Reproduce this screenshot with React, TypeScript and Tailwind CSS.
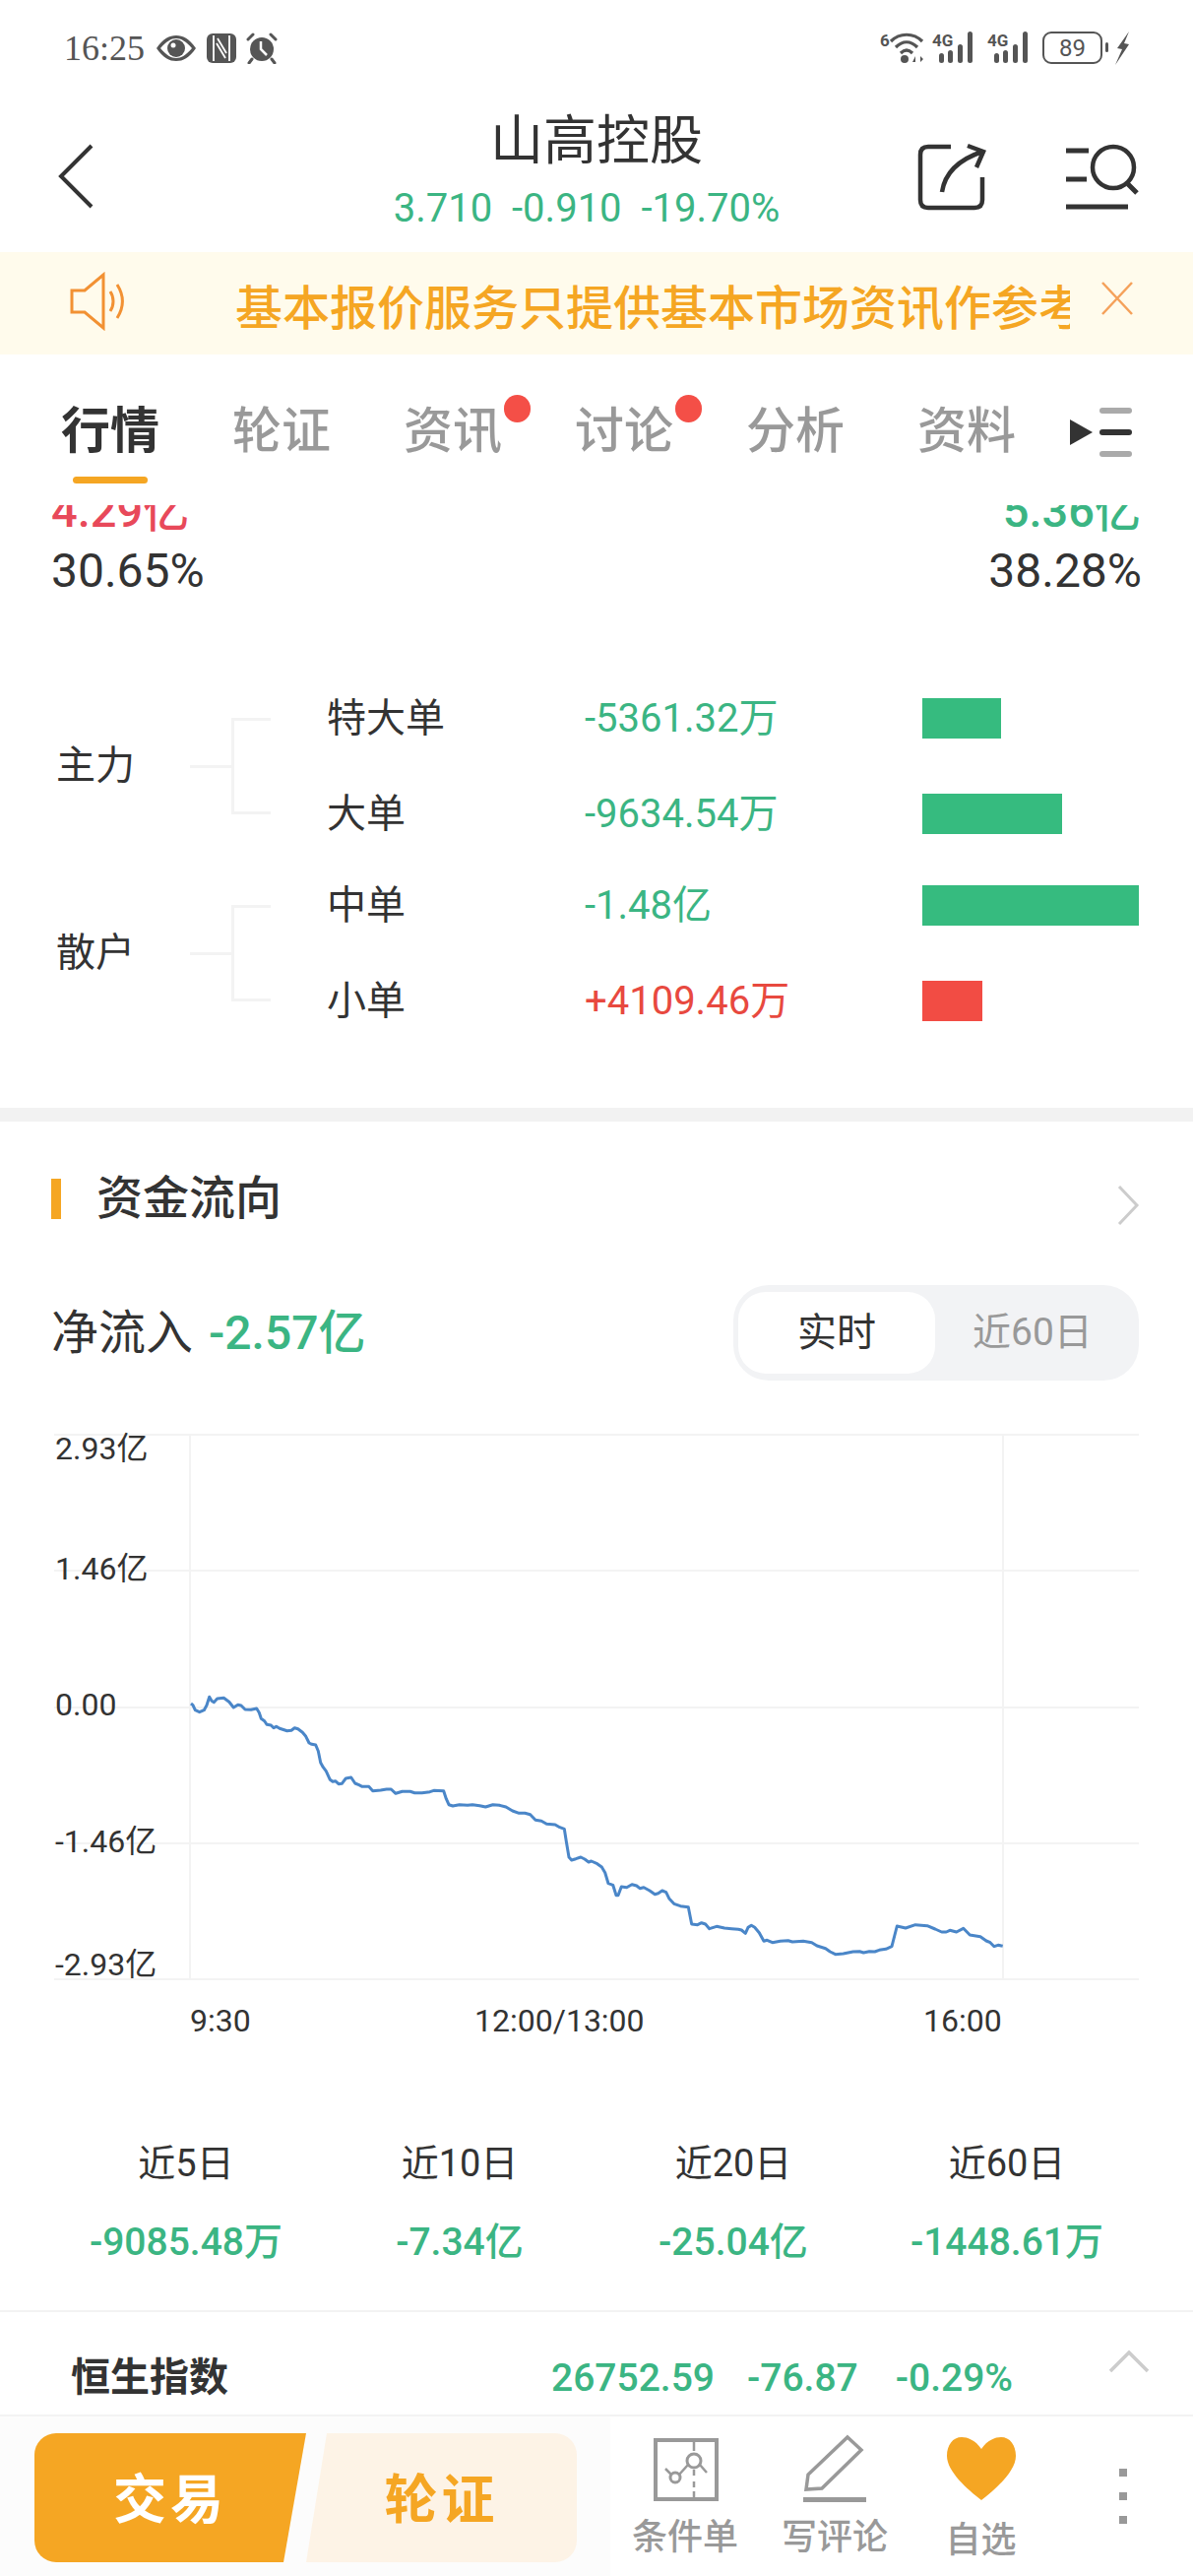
import React from 'react';

const GREEN = 'text-[#3bb583]';

// traced from the reference, in 3x crop coordinates
const seg1 = [12,90,18,95,25,110,38,116,52,110,60,95,68,70,75,82,82,86,92,75,112,73,128,85,142,102,155,94,165,96,177,108,195,109,212,105,220,118,226,136,236,143,243,154,256,156,264,164,272,160,282,166,305,173,318,172,328,164,338,167,352,178,362,190,372,210,380,214,392,216,400,235,407,270,415,284,424,296,436,322,444,328,452,326,462,335,472,334,484,318,500,315,512,333,524,338,534,343,554,343,566,356,590,354,608,351,622,351,636,364,656,358,680,358,694,362,716,362,740,359,752,355,782,356,790,380,798,398,810,402,830,398,855,400,870,398];
const seg2 = [30,158,52,161,70,165,92,158,112,160,132,165,152,177,172,184,190,184,206,188,222,205,240,208,256,217,282,219,296,227,310,232,316,270,324,318,332,327,345,323,360,318,372,324,384,333,392,330,410,338,424,348,434,365,444,398,458,403,468,434,474,434,484,408,500,410,516,401,530,405,540,413,552,410,570,420,586,431,596,428,608,420,620,425,630,445,644,460,664,467,688,470,698,522,716,524,728,518,740,522,752,536,774,529,798,534,820,536];
const seg3 = [0,178,10,180,22,190,30,172,40,166,50,172,64,188,78,214,88,211,104,218,128,214,152,212,165,216,198,214,224,218,240,228,266,236,280,246,296,254,320,252,350,246,370,245,382,249,400,245,416,246,430,241,450,238,468,230,484,168,510,174,540,164,576,167,600,177,620,186,634,186,645,181,665,186,686,175,706,195,738,200,756,213,768,218,780,230,792,226,806,229];

const toPoints = (seg: number[], ox: number, oy: number) => {
  const out: string[] = [];
  for (let i = 0; i < seg.length; i += 2) {
    out.push(`${(ox + seg[i] / 3).toFixed(1)},${(oy + seg[i + 1] / 3).toFixed(1)}`);
  }
  return out.join(' ');
};
const linePoints = [toPoints(seg1, 190, 1700), toPoints(seg2, 470, 1780), toPoints(seg3, 750, 1900)].join(' ');

const tabs = ['行情', '轮证', '资讯', '讨论', '分析', '资料'];

const StatusBar = () => (
  <div className="flex h-[96px] items-start justify-between pl-[65px] pr-[64px] pt-[32px] text-[#555]">
    <div className="flex items-center">
      <span className="text-[36px] leading-[34px] [font-family:'Liberation_Serif',serif]">16:25</span>
      <svg className="ml-[11px]" width="42" height="28" viewBox="0 0 42 28">
        <path d="M1 14 C8 4 14 1 21 1 C28 1 34 4 41 14 C34 24 28 27 21 27 C14 27 8 24 1 14Z M5 14 C11 21 16 24 21 24 C26 24 31 21 37 14 C31 7 26 4 21 4 C16 4 11 7 5 14Z" fill="#555" fillRule="evenodd" />
        <circle cx="21" cy="14" r="9" fill="#555" />
        <circle cx="18" cy="11" r="2.5" fill="#fff" />
      </svg>
      <svg className="ml-[10px]" width="30" height="30" viewBox="0 0 30 30">
        <rect x="0" y="0" width="30" height="30" rx="6" fill="#555" />
        <path d="M7 2 V28 M23 2 V28 M11 5 L20 20 M10 10 L19 25" fill="none" stroke="#fff" strokeWidth="1.8" />
      </svg>
      <svg className="ml-[10px]" width="32" height="32" viewBox="0 0 32 32">
        <circle cx="16" cy="17" r="12" fill="#555" />
        <path d="M15 9 V17 L21 23" fill="none" stroke="#fff" strokeWidth="2.5" />
        <path d="M2 7 L7 2 M30 7 L25 2 M6 27 L3 31 M26 27 L29 31" stroke="#555" strokeWidth="3" strokeLinecap="round" />
      </svg>
    </div>
    <div className="flex items-start">
      <svg width="45" height="33" viewBox="0 0 45 33">
        <text x="0" y="15" fontSize="17" fontWeight="700" fill="#555" fontFamily="Roboto">6</text>
        <path d="M11 10 C20 1 34 1 43 10 M16 16 C23 9 31 9 38 16 M21 22 C25 18 29 18 33 22" fill="none" stroke="#555" strokeWidth="3.2" />
        <circle cx="25" cy="28" r="4" fill="#555" />
        <path d="M33 31 L36 25 V31Z M39 25 V31 M41 25 L44 28 L41 31Z" fill="#555" />
      </svg>
      {[0, 1].map((i) => (
        <svg key={i} className={i === 0 ? 'ml-[8px]' : 'ml-[10px]'} width="46" height="33" viewBox="0 0 46 33">
          <text x="0" y="15" fontSize="17" fontWeight="700" fill="#555" fontFamily="Roboto">4G</text>
          <rect x="7" y="22" width="5" height="10" rx="2.5" fill="#555" />
          <rect x="16" y="19" width="5" height="13" rx="2.5" fill="#555" />
          <rect x="26" y="13" width="5" height="19" rx="2.5" fill="#555" />
          <rect x="36" y="0" width="5" height="32" rx="2.5" fill="#555" />
        </svg>
      ))}
      <div className="ml-[10px] flex h-[33px] w-[61px] items-center justify-center rounded-[9px] border-2 border-[#555] text-[24px] leading-none">89</div>
      <div className="ml-[3px] mt-[11px] h-[10px] w-[3px] rounded-sm bg-[#555]" />
      <svg className="ml-[7px]" width="15" height="34" viewBox="0 0 15 34">
        <path d="M14 0 L2 17 L7 18 L0 34 L14 13 L9 12Z" fill="#555" />
      </svg>
    </div>
  </div>
);

const Header = () => (
  <div className="grid h-[160px] grid-cols-[1fr_auto_1fr] items-start">
    <div className="pl-[59px] pt-[50px]">
      <svg width="36" height="66" viewBox="0 0 36 66">
        <path d="M34 2 L3 33 L34 64" fill="none" stroke="#333" strokeWidth="4" />
      </svg>
    </div>
    <div className="flex flex-col items-center pt-[13px]">
      <div className="text-[54px] leading-[70px] text-[#333]">山高控股</div>
      <div className={`mt-[11px] mr-[20px] whitespace-pre text-[40px] leading-[44px] ${GREEN}`}>3.710  -0.910  -19.70%</div>
    </div>
    <div className="flex justify-end pr-[54px] pt-[49px]">
      <svg width="70" height="70" viewBox="0 0 70 70">
        <path d="M34 4 H11 Q3 4 3 12 V58 Q3 66 11 66 H58 Q66 66 66 58 V35" fill="none" stroke="#333" strokeWidth="4.5" />
        <path d="M25 50 C28 30 42 17 66 9 M51 3 L67 9 L60 25" fill="none" stroke="#333" strokeWidth="4.5" />
      </svg>
      <svg className="ml-[80px]" width="76" height="70" viewBox="0 0 76 70">
        <path d="M1 8 H24 M1 37 H22 M1 65 H64 M64 42 L73 51" fill="none" stroke="#333" strokeWidth="5" />
        <circle cx="49" cy="25" r="21" fill="none" stroke="#333" strokeWidth="4.5" />
      </svg>
    </div>
  </div>
);

const Notice = () => (
  <div className="flex h-[104px] items-center bg-[#fffbec]">
    <svg className="ml-[71px] -mt-[4px]" width="58" height="60" viewBox="0 0 58 60">
      <path d="M2 19 H15 L34 3 V57 L15 41 H2Z" fill="none" stroke="#f29133" strokeWidth="3" />
      <path d="M41 20 C45 26 45 34 41 40 M48 13 C55 24 55 36 48 47" fill="none" stroke="#f29133" strokeWidth="3" />
    </svg>
    <div className="ml-[110px] mt-[11px] w-[848px] overflow-hidden whitespace-nowrap text-[48px] font-medium leading-[60px] text-[#f5a623]">基本报价服务只提供基本市场资讯作参考</div>
    <svg className="ml-[31px] -mt-[10px]" width="34" height="36" viewBox="0 0 34 36">
      <path d="M2 2 L32 34 M32 2 L2 34" fill="none" stroke="#f5a15a" strokeWidth="2.5" />
    </svg>
  </div>
);

const Tabs = () => (
  <div className="flex h-[153px] items-start pl-[62px] pt-[53px]">
    <div className="flex gap-[74px]">
      {tabs.map((t, i) => (
        <div key={t} className="relative w-[100px]">
          <div className={`text-[50px] leading-[50px] ${i === 0 ? 'font-bold text-[#333]' : 'font-medium text-[#999]'}`}>{t}</div>
          {i === 0 && <div className="mx-auto mt-[21px] h-[7px] w-[76px] rounded-full bg-[#f5a623]" />}
          {(i === 2 || i === 3) && <span className="absolute -right-[29px] -top-[12px] h-[28px] w-[27px] rounded-full bg-[#f44f47]" />}
        </div>
      ))}
    </div>
    <svg className="ml-[55px] -mt-[1px]" width="64" height="54" viewBox="0 0 64 54">
      <path d="M0 14 L23 27 L0 40Z" fill="#333" />
      <rect x="30" y="2" width="33" height="6" rx="3" fill="#aaa" />
      <rect x="30" y="24" width="33" height="6" rx="3" fill="#333" />
      <rect x="30" y="46" width="33" height="6" rx="3" fill="#aaa" />
    </svg>
  </div>
);

const Bracket = () => (
  <div className="flex items-center">
    <div className="h-[3px] w-[42px] bg-[#f3f3f3]" />
    <div className="h-[98px] w-[40px] border-y-[3px] border-l-[3px] border-[#f3f3f3]" />
  </div>
);

const FlowRow = ({ name, value, width, up }: { name: string; value: string; width: number; up?: boolean }) => (
  <div className="flex h-[93px] items-center">
    <div className="w-[262px] text-[40px] leading-[50px] text-[#333]">{name}</div>
    <div className={`w-[343px] text-[40px] leading-[50px] ${up ? 'text-[#e8493f]' : GREEN}`}>{value}</div>
    <div className={`h-[41px] ${up ? 'bg-[#f24c44]' : 'bg-[#36bb7f]'}`} style={{ width }} />
  </div>
);

const FlowGroup = ({ label, rows }: { label: string; rows: { name: string; value: string; width: number; up?: boolean }[] }) => (
  <div className="flex items-center pl-[57px]">
    <div className="w-[136px] text-[40px] leading-[50px] text-[#333]">{label}</div>
    <Bracket />
    <div className="ml-[57px] flex flex-col gap-[4px]">
      {rows.map((r) => <FlowRow key={r.name} {...r} />)}
    </div>
  </div>
);

const Chart = () => (
  <div className="relative h-[673px]">
    <svg className="block" width="1212" height="673" viewBox="0 1402 1212 673">
      {[1457, 1595, 1734, 1872, 2010].map((y) => (
        <line key={y} x1="55" x2="1157" y1={y} y2={y} stroke="#f3f3f3" strokeWidth="2" />
      ))}
      <line x1="193" x2="193" y1="1457" y2="2010" stroke="#f3f3f3" strokeWidth="2" />
      <line x1="1019" x2="1019" y1="1457" y2="2010" stroke="#f3f3f3" strokeWidth="2" />
      <polyline points={linePoints} fill="none" stroke="#4a86c8" strokeWidth="3" strokeLinejoin="round" />
    </svg>
    <div className="absolute left-[56px] top-[51px] text-[32px] leading-[36px] text-[#333]">2.93亿</div>
    <div className="absolute left-[56px] top-[173px] text-[32px] leading-[36px] text-[#333]">1.46亿</div>
    <div className="absolute left-[56px] top-[311px] text-[32px] leading-[36px] text-[#333]">0.00</div>
    <div className="absolute left-[56px] top-[450px] text-[32px] leading-[36px] text-[#333]">-1.46亿</div>
    <div className="absolute left-[56px] top-[575px] text-[32px] leading-[36px] text-[#333]">-2.93亿</div>
    <div className="absolute left-[193px] top-[632px] text-[32px] leading-[36px] text-[#333]">9:30</div>
    <div className="absolute left-[482px] top-[632px] text-[32px] leading-[36px] text-[#333]">12:00/13:00</div>
    <div className="absolute left-[938px] top-[632px] text-[32px] leading-[36px] text-[#333]">16:00</div>
  </div>
);

const Capital = () => (
  <div>
    <div className="flex h-[46px] items-center justify-between pl-[52px] pr-[54px] mt-[55px]">
      <div className="flex items-center">
        <div className="h-[41px] w-[10px] bg-[#f5a623]" />
        <div className="ml-[36px] text-[47px] font-medium leading-[46px] text-[#333]">资金流向</div>
      </div>
      <svg className="mt-[14px]" width="24" height="42" viewBox="0 0 24 42">
        <path d="M3 2 L21 21 L3 40" fill="none" stroke="#ccc" strokeWidth="3" />
      </svg>
    </div>
    <div className="mt-[65px] flex items-center justify-between pl-[52px] pr-[55px]">
      <div className="flex items-center">
        <span className="text-[48px] leading-[60px] text-[#333]">净流入</span>
        <span className={`ml-[16px] text-[48px] font-medium leading-[60px] ${GREEN}`}>-2.57亿</span>
      </div>
      <div className="flex h-[97px] w-[412px] items-center rounded-[36px] bg-[#f2f3f5] pl-[5px]">
        <div className="flex h-[83px] w-[200px] items-center justify-center rounded-[28px] bg-white text-[40px] text-[#333]">实时</div>
        <div className="ml-[38px] text-[39px] text-[#999]">近60日</div>
      </div>
    </div>
    <Chart />
  </div>
);

const Stats = () => (
  <div className="mt-[99px] grid grid-cols-4 px-[50px] text-center">
    {[
      ['近5日', '-9085.48万'],
      ['近10日', '-7.34亿'],
      ['近20日', '-25.04亿'],
      ['近60日', '-1448.61万'],
    ].map(([k, v]) => (
      <div key={k}>
        <div className="text-[38px] leading-[46px] text-[#333]">{k}</div>
        <div className={`mt-[34px] text-[39px] font-medium leading-[46px] ${GREEN}`}>{v}</div>
      </div>
    ))}
  </div>
);

const Scroller = () => (
  <div className="min-h-0 flex-1 overflow-hidden">
    <div className="-mt-[17px] flex justify-between px-[52px]">
      <div>
        <div className="text-[47px] font-medium leading-[46px] text-[#e8495a]">4.29亿</div>
        <div className="mt-[10px] text-[48px] leading-[56px] text-[#333]">30.65%</div>
      </div>
      <div className="text-right">
        <div className={`pr-[1px] text-[47px] font-medium leading-[46px] ${GREEN}`}>5.36亿</div>
        <div className="mt-[10px] text-[48px] leading-[56px] text-[#333]">38.28%</div>
      </div>
    </div>
    <div className="mt-[75px]">
      <FlowGroup
        label="主力"
        rows={[
          { name: '特大单', value: '-5361.32万', width: 80 },
          { name: '大单', value: '-9634.54万', width: 142 },
        ]}
      />
      <FlowGroup
        label="散户"
        rows={[
          { name: '中单', value: '-1.48亿', width: 220 },
          { name: '小单', value: '+4109.46万', width: 61, up: true },
        ]}
      />
    </div>
    <div className="mt-[62px] h-[14px] bg-[#f2f2f2]" />
    <Capital />
    <Stats />
  </div>
);

const ToolItem = ({ label, icon, className, labelClass = '' }: { label: string; icon: React.ReactNode; className: string; labelClass?: string }) => (
  <div className={`flex flex-col items-center ${className}`}>
    <div className="flex h-[70px] items-center justify-center">{icon}</div>
    <div className={`mt-[15px] text-[36px] font-medium leading-[40px] text-[#999] ${labelClass}`}>{label}</div>
  </div>
);

const BottomBar = () => (
  <div className="flex h-[162px]">
    <div className="flex h-full w-[620px] bg-[#fcfcfc] pl-[35px] pt-[17px]">
      <div className="flex h-[131px] w-[276px] items-center justify-center rounded-l-[22px] bg-[#f5a623] pt-[6px] text-[54px] font-bold tracking-[4px] text-white [clip-path:polygon(0_0,100%_0,calc(100%-23px)_100%,0_100%)]">交易</div>
      <div className="flex h-[131px] w-[275px] items-center justify-center rounded-r-[22px] bg-[#fdf3e6] pt-[6px] text-[54px] font-bold tracking-[4px] text-[#f5a623] [clip-path:polygon(21px_0,100%_0,100%_100%,0_100%)]">轮证</div>
    </div>
    <div className="flex flex-1 pt-[18px]">
      <ToolItem
        className="w-[152px]"
        label="条件单"
        icon={
          <svg width="70" height="70" viewBox="0 0 70 70">
            <rect x="5" y="6" width="62" height="60" fill="none" stroke="#999" strokeWidth="4" />
            <path d="M44 8 V17 M44 36 V42 M44 48 V54 M44 58 V64" stroke="#999" strokeWidth="2.5" />
            <circle cx="44" cy="27" r="7" fill="none" stroke="#999" strokeWidth="3" />
            <circle cx="25" cy="44" r="5" fill="none" stroke="#999" strokeWidth="3" />
            <path d="M15 35 L21 41 M29 41 L38 31 M50 31 L57 39" stroke="#999" strokeWidth="2.5" />
          </svg>
        }
      />
      <ToolItem
        className="w-[152px]"
        label="写评论"
        icon={
          <svg width="70" height="70" viewBox="0 0 70 70">
            <path d="M48 3 L62 16 L22 55 L6 56 L8 41Z" fill="none" stroke="#999" strokeWidth="3.5" />
            <rect x="3" y="64" width="64" height="5" fill="#999" />
          </svg>
        }
      />
      <ToolItem
        className="w-[145px]"
        label="自选"
        labelClass="translate-y-[3px]"
        icon={
          <svg width="72" height="66" viewBox="0 0 72 66">
            <path d="M36 13 C30 4 22 1 16 1 C7 1 1 9 1 20 C1 36 22 54 36 65 C50 54 71 36 71 20 C71 9 65 1 56 1 C50 1 42 4 36 13Z" fill="#f5a623" />
          </svg>
        }
      />
      <div className="flex flex-col gap-[16px] pl-[68px] pt-[35px]">
        <div className="h-[8px] w-[8px] bg-[#999]" />
        <div className="h-[8px] w-[8px] bg-[#999]" />
        <div className="h-[8px] w-[8px] bg-[#999]" />
      </div>
    </div>
  </div>
);

export default function App() {
  return (
    <div className="flex h-[2616px] w-[1212px] flex-col overflow-hidden bg-white [font-family:Roboto,'Noto_Sans_CJK_SC',sans-serif]">
      <StatusBar />
      <Header />
      <Notice />
      <Tabs />
      <Scroller />
      <div className="border-y-2 border-[#f3f3f3]">
        <div className="flex h-[104px] items-center pl-[72px] pr-[44px] pt-[30px]">
          <div className="w-[488px] text-[40px] font-bold leading-[50px] text-[#333]">恒生指数</div>
          <div className={`flex text-[39px] font-medium leading-[50px] ${GREEN}`}>
            <span>26752.59</span>
            <span className="ml-[33px]">-76.87</span>
            <span className="ml-[38px]">-0.29%</span>
          </div>
          <svg className="ml-auto -mt-[34px]" width="42" height="24" viewBox="0 0 42 24">
            <path d="M2 22 L21 3 L40 22" fill="none" stroke="#ccc" strokeWidth="3.5" />
          </svg>
        </div>
      </div>
      <BottomBar />
    </div>
  );
}
